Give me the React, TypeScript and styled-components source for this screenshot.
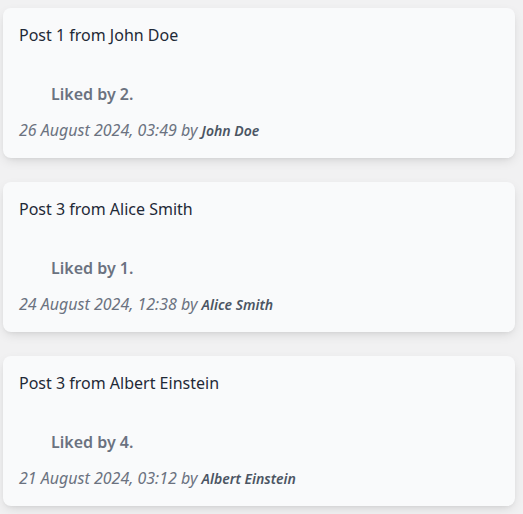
import React from "react";
import styled, { createGlobalStyle } from "styled-components";

const Global = createGlobalStyle`
  html, body { margin: 0; padding: 0; background: #f1f1f2; }
  body { font-family: "Noto Sans", "Open Sans", sans-serif; }
`;

const List = styled.div`
  display: flex;
  flex-direction: column;
  gap: 24px;
  padding: 8px 8px 8px 3px;
`;

const Card = styled.article`
  background: #f9fafb;
  border-radius: 8px;
  box-shadow: 0 4px 12px -2px rgba(0, 0, 0, 0.12), 0 2px 4px -2px rgba(0, 0, 0, 0.08);
  padding: 15px 16px 15px;
  display: flex;
  flex-direction: column;
`;

const Title = styled.p`
  margin: 0;
  font-size: 16px;
  line-height: 24px;
  color: #1f2937;
`;

const Likes = styled.p`
  margin: 35px 0 0 32px;
  font-size: 16px;
  line-height: 24px;
  font-weight: 600;
  color: #6b7280;
`;

const Meta = styled.p`
  margin: 12px 0 0;
  font-size: 16px;
  line-height: 24px;
  font-style: italic;
  color: #6b7280;
`;

const Author = styled.span`
  font-size: 14px;
  font-weight: 600;
  color: #4b5563;
`;

const posts = [
  { title: "Post 1 from John Doe", likes: 2, date: "26 August 2024, 03:49", author: "John Doe" },
  { title: "Post 3 from Alice Smith", likes: 1, date: "24 August 2024, 12:38", author: "Alice Smith" },
  { title: "Post 3 from Albert Einstein", likes: 4, date: "21 August 2024, 03:12", author: "Albert Einstein" },
];

export default function App() {
  return (
    <>
      <Global />
      <List>
        {posts.map((p, i) => (
          <Card key={i}>
            <Title>{p.title}</Title>
            <Likes>Liked by {p.likes}.</Likes>
            <Meta>
              {p.date} by <Author>{p.author}</Author>
            </Meta>
          </Card>
        ))}
      </List>
    </>
  );
}
